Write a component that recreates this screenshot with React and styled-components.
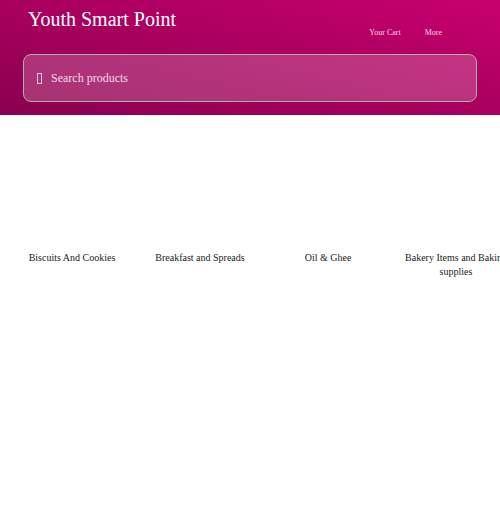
import React from 'react';
import styled, { createGlobalStyle } from 'styled-components';

const GlobalStyle = createGlobalStyle`
  body {
    margin: 0;
    background: #ffffff;
    font-family: "Liberation Serif", "Times New Roman", serif;
  }
`;

const Header = styled.header`
  background: linear-gradient(to top right, #8a004e, #c8006f);
  height: 115px;
  box-sizing: border-box;
  padding: 8px 23px 0 23px;
  display: flex;
  flex-direction: column;
`;

const TopRow = styled.div`
  display: flex;
  justify-content: space-between;
  align-items: flex-start;
  height: 46px;
`;

const Brand = styled.h1`
  margin: 0 0 0 5px;
  font-size: 20px;
  font-weight: normal;
  color: #ffffff;
  line-height: 23px;
`;

const Nav = styled.nav`
  display: flex;
  gap: 24px;
  padding: 20px 35px 0 0;
`;

const NavLink = styled.a`
  color: #f6d6e8;
  font-size: 8px;
  text-decoration: none;
`;

const SearchBox = styled.label`
  display: flex;
  align-items: center;
  gap: 9px;
  height: 48px;
  box-sizing: border-box;
  padding: 0 13px;
  border: 1px solid #a6b4a8;
  border-radius: 8px;
  background: rgba(255, 255, 255, 0.2);
`;

const SearchIcon = styled.span`
  width: 5px;
  height: 11px;
  border: 1px solid #e8c6da;
  box-sizing: border-box;
`;

const SearchInput = styled.input`
  flex: 1;
  background: transparent;
  border: none;
  outline: none;
  color: #ffffff;
  font-family: "Liberation Serif", "Times New Roman", serif;
  font-size: 12px;
  padding: 0;
  &::placeholder {
    color: #f4dcea;
  }
`;

const Categories = styled.section`
  display: grid;
  grid-template-columns: repeat(4, 128px);
  padding: 0 8px;
`;

const Category = styled.a`
  display: flex;
  flex-direction: column;
  align-items: center;
  text-decoration: none;
  color: #222222;
  padding: 0 4px;
`;

const Thumb = styled.div`
  width: 120px;
  height: 136px;
`;

const Label = styled.span`
  font-size: 10px;
  line-height: 14px;
  text-align: center;
`;

const categories = [
  'Biscuits And Cookies',
  'Breakfast and Spreads',
  'Oil & Ghee',
  'Bakery Items and Baking supplies',
];

export default function App() {
  return (
    <>
      <GlobalStyle />
      <Header>
        <TopRow>
          <Brand>Youth Smart Point</Brand>
          <Nav>
            <NavLink href="#">Your Cart</NavLink>
            <NavLink href="#">More</NavLink>
          </Nav>
        </TopRow>
        <SearchBox>
          <SearchIcon />
          <SearchInput placeholder="Search products" />
        </SearchBox>
      </Header>
      <Categories>
        {categories.map((name) => (
          <Category href="#" key={name}>
            <Thumb />
            <Label>{name}</Label>
          </Category>
        ))}
      </Categories>
    </>
  );
}
